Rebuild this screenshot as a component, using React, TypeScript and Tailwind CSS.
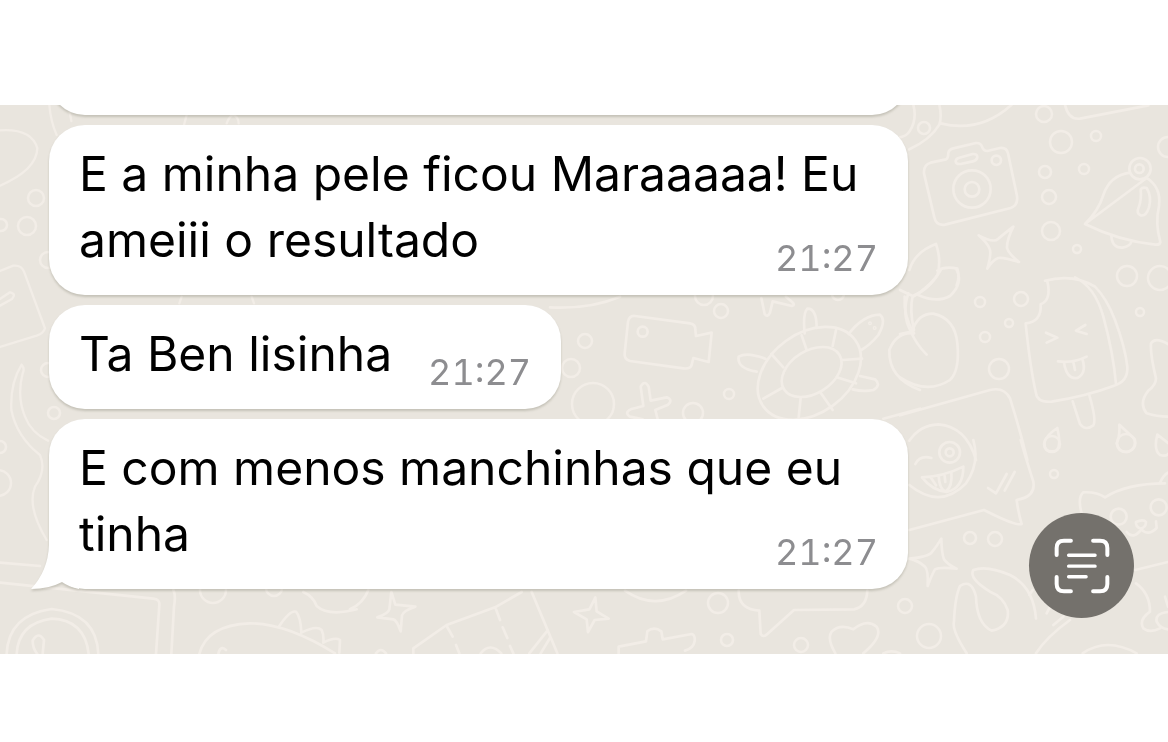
import React from "react";

type Message = { text: string; time: string; tail?: boolean };

const messages: Message[] = [
  { text: "E a minha pele ficou Maraaaaa! Eu ameiii o resultado", time: "21:27" },
  { text: "Ta Ben lisinha", time: "21:27" },
  { text: "E com menos manchinhas que eu tinha", time: "21:27", tail: true },
];

const dots: [number, number, number][] = [
  // right column
  [1044, 114, 8], [1061, 142, 11], [1096, 136, 5], [1045, 172, 6], [1084, 169, 5],
  [1049, 197, 7], [1051, 231, 9], [1077, 249, 4], [1127, 276, 10], [1160, 278, 12],
  [1168, 147, 10], [980, 302, 5], [1021, 299, 7], [1009, 323, 4], [985, 337, 5],
  [999, 369, 10], [1140, 312, 4], [1054, 474, 4], [1052, 444, 8], [1126, 443, 9],
  [970, 538, 6], [995, 539, 7], [924, 128, 6],
  // middle
  [585, 341, 7], [571, 368, 9], [593, 404, 21], [721, 311, 7], [729, 394, 5], [693, 413, 10],
  [704, 296, 9], [838, 294, 6],
  // bottom
  [718, 603, 10], [727, 640, 6], [801, 645, 7], [905, 606, 7], [929, 636, 12],
  [213, 590, 13], [274, 588, 8],
  // left
  [36, 198, 8], [27, 226, 9], [1, 225, 6], [48, 260, 8], [54, 413, 6], [48, 370, 7],
  [0, 447, 6], [-2, 483, 13],
];

function Wallpaper() {
  return (
    <svg
      aria-hidden="true"
      className="absolute inset-0 h-full w-full"
      viewBox="0 105 1168 549"
      preserveAspectRatio="xMidYMid slice"
      fill="none"
      stroke="#f2ede7"
      strokeLinecap="round"
      strokeLinejoin="round"
    >
      <g strokeWidth="2.5">
        {dots.map(([x, y, r]) => (
          <circle key={`${x}-${y}`} cx={x} cy={y} r={r} />
        ))}
      </g>

      {/* camera, bell, star */}
      <g transform="translate(900 100) scale(.33333)" strokeWidth="8">
        <path d="M40 14Q52 60 28 95Q20 108 0 112M118 14Q126 50 118 74Q90 120 28 148M122 70Q240 100 335 14" />
        <path d="M495 14Q505 60 540 56L745 16" />
        <path d="M92 188L138 178Q145 174 145 158Q147 148 160 145L228 129Q242 128 246 140Q250 153 262 153L300 144Q320 142 324 160L351 288Q355 316 332 324L135 374Q108 378 103 352L72 220Q70 194 92 188Z" />
        <path d="M178 173L218 162Q232 161 232 171Q231 181 218 184L182 192Q168 193 167 184Q167 176 178 173Z" />
        <circle cx="289" cy="181" r="14" />
        <circle cx="216" cy="267" r="56" />
        <circle cx="216" cy="268" r="22" />
        <path d="M236 406Q280 430 294 417Q308 405 340 380Q320 420 321 444Q325 460 357 486Q310 471 295 474Q278 480 262 506Q275 460 269 447Q263 430 236 406Z" />
        <path d="M555 372Q596 332 610 285Q630 226 690 218M740 234Q784 262 777 318Q765 370 781 426Q780 435 766 434Q655 422 555 372Z" />
        <circle cx="720" cy="206" r="32" />
        <circle cx="718" cy="206" r="13" />
        <path d="M722 268Q728 260 740 264Q756 290 747 322Q738 350 722 346Q708 340 716 322Q725 300 722 268ZM634 406Q636 445 668 443Q692 438 695 422" />
        <path d="M28 510Q45 455 108 432Q125 480 112 526Q80 566 40 590M112 512Q135 498 172 506Q180 530 170 556" />
      </g>

      {/* cherry, ice lolly, splash */}
      <g transform="translate(900 270) scale(.33333)" strokeWidth="8">
        <path d="M122 0Q90 58 38 78M170 0Q190 40 150 78Q110 100 55 75M25 70Q5 130 30 180Q50 225 80 254M0 60L38 78Q28 120 42 180M38 180Q55 130 100 131Q165 145 172 220Q180 300 150 330Q80 375 0 322M0 192L38 184" />
        <path d="M435 32Q520 10 585 50Q620 85 645 150Q675 230 682 290Q685 335 640 348Q560 378 455 395Q412 398 408 370Q390 290 377 160Q425 155 422 103Q455 90 442 34M525 22Q585 50 610 140Q640 250 648 342" />
        <path d="M438 188L472 203L440 218M556 165L528 182L560 192M474 274Q520 280 560 260M492 278Q500 328 532 324Q560 310 548 270M520 276L525 300M518 394L540 462Q556 484 580 466Q590 450 568 376" />
        <path d="M472 474Q485 530 468 542Q430 552 434 515Q440 495 472 474ZM658 464Q660 500 650 520Q655 550 685 545Q712 535 704 507ZM772 494Q760 540 780 555Q800 560 806 550M772 494L806 520" />
        <path d="M804 222Q765 200 753 220Q750 250 768 325Q768 345 745 362Q715 400 740 430Q770 440 804 440" />
        <path d="M0 436L270 360Q312 350 330 385Q360 480 382 570" />
        <path d="M28 512Q60 465 115 463Q200 470 228 570" />
      </g>

      {/* laughing sticker, cat, leaves */}
      <g transform="translate(900 440) scale(.33333)" strokeWidth="8">
        <path d="M220 0Q240 70 198 130Q120 210 28 135M362 0Q370 30 400 125Q408 170 350 180Q355 220 365 252Q350 260 252 210L28 270" />
        <circle cx="149" cy="37" r="31" />
        <circle cx="149" cy="37" r="12" />
        <path d="M46 72Q60 44 94 54M66 112Q130 110 190 80Q190 145 140 156Q95 150 66 112ZM92 112L108 136M116 106Q118 150 138 154Q158 140 154 96M134 108L136 126M264 144L288 160L320 102M344 96L314 152" />
        <path d="M28 356Q85 350 95 337Q110 320 124 296Q125 340 132 358Q145 375 170 386Q120 380 105 388Q95 405 83 438Q85 390 75 380Q55 362 28 356Z" />
        <path d="M200 640Q155 570 162 545Q165 470 180 438Q215 415 228 470Q230 550 275 572Q330 560 323 510Q310 470 270 455Q205 415 220 390Q260 375 330 405Q400 440 408 535M408 640Q440 590 510 540M440 520L450 500M460 555L490 530M388 465L398 450" />
        <path d="M548 230Q530 175 550 157Q590 155 615 172Q680 130 795 130M780 128Q790 105 804 98M706 390L804 366M708 430Q750 460 750 515Q715 540 730 565Q750 580 780 565M795 470L804 500M804 516Q765 520 770 545Q780 565 804 568M548 640Q620 590 710 640" />
        <circle cx="656" cy="230" r="24" />
        <circle cx="776" cy="202" r="24" />
        <path d="M708 246Q730 236 738 246Q738 262 722 266Q706 260 708 246ZM680 276Q700 300 724 268Q745 290 770 264L768 244" />
      </g>

      {/* video camera, turtle, plus */}
      <g transform="translate(550 290) scale(.33333)" strokeWidth="8">
        <path d="M0 52Q120 58 210 20" />
        <path d="M255 78L420 100Q438 103 436 120L438 138L485 128L476 216L430 204L425 225Q420 238 400 235L240 213Q222 208 224 190L234 95Q238 76 255 78Z" />
        <circle cx="278" cy="125" r="15" />
        <path d="M272 290Q284 268 296 290L302 332L350 322Q370 330 354 344L316 360L326 400M278 388L240 380Q222 368 242 358L280 348L272 290" />
        <path d="M634 24L644 72Q652 84 660 68L668 34L726 48Q738 44 724 34L708 20" />
        <ellipse cx="778" cy="250" rx="170" ry="120" transform="rotate(-36 778 250)" />
        <ellipse cx="785" cy="246" rx="98" ry="64" transform="rotate(-32 785 246)" />
        <path d="M755 136L770 180M858 120L848 168M936 206L878 210M918 280L860 262M848 360L812 308M746 382L752 324M640 326L696 294M664 192L700 232M764 130Q758 70 772 56Q800 55 800 114M646 206Q590 185 566 200Q560 235 620 245M896 132Q940 75 990 74Q1010 90 985 135Q960 165 934 180M930 258L975 268Q995 285 970 300Q940 306 908 298" />
        <path d="M1064 20Q1060 80 1092 130M1092 130Q1040 125 1018 180Q1015 265 1110 300M1000 386L1110 356" />
        <circle cx="960" cy="100" r="2" />
        <circle cx="974" cy="114" r="2" />
      </g>

      {/* left edge */}
      <g transform="translate(0 95) scale(.33333)" strokeWidth="7">
        <path d="M0 106Q95 100 112 160Q110 225 0 272M148 30Q152 80 170 120M205 30L214 78M560 60L552 90M680 85Q690 60 700 60Q715 65 716 85M0 528L40 512Q65 510 72 530L135 700Q130 715 110 722L0 756M0 612L30 592Q50 596 36 612L0 632M545 605L538 625M755 605L762 625" />
      </g>
      <g transform="translate(0 300) scale(.33333)" strokeWidth="7">
        <path d="M65 194Q30 250 34 330Q50 410 120 465Q140 510 105 560Q80 620 140 720M65 194Q75 205 68 220Q50 290 75 350Q95 400 144 422" />
      </g>

      {/* bottom strip */}
      <g transform="translate(0 570) scale(.33333)" strokeWidth="8">
        <path d="M0 -22L120 -12M0 38L460 86Q480 88 478 105L468 252M520 60Q528 75 522 110L514 252M20 252Q25 135 155 117Q290 130 295 252M50 252Q55 160 155 146Q255 150 266 252M128 252L132 210Q115 182 98 212Q98 235 112 252" />
        <path d="M598 252Q620 165 750 160Q860 160 1005 250M838 168Q870 120 888 125Q902 140 904 188Q950 165 965 180Q972 195 970 218Q1005 200 1020 210L1018 248M655 252Q660 225 678 240M910 66Q940 80 950 108Q985 140 1070 118M1050 118Q1090 100 1105 60" />
      </g>
      <g transform="translate(350 570) scale(.33333)" strokeWidth="8">
        <path d="M124 66L136 104L196 110Q160 122 156 136L152 184Q140 150 130 148L82 142Q115 130 118 118ZM736 82L740 124L776 146L734 150L714 186L710 148L672 126L718 118Z" />
        <path d="M190 250V235L290 165L435 112L515 66M545 66L622 250M290 168L308 200M318 225L328 250M438 118L450 150M458 172L472 204M480 228L490 250M590 185L538 250M600 204L572 250M78 250Q92 230 108 250M392 250Q420 215 454 250M825 62Q915 125 1008 62M806 250V230L888 214L892 184Q912 168 934 184L938 208L1025 192Q1036 195 1034 214Q1030 236 1005 242" />
      </g>
      <g transform="translate(650 570) scale(.33333)" strokeWidth="8">
        <path d="M266 62Q265 118 328 122L332 192Q340 204 352 192L432 120L612 118Q650 110 652 62M556 250Q530 205 545 185Q570 160 610 178Q650 145 680 170Q700 200 640 250M700 250Q725 238 750 250" />
      </g>
    </svg>
  );
}

function Tail() {
  return (
    <svg
      aria-hidden="true"
      className="absolute bottom-0 -left-[18px] h-14 w-12"
      viewBox="0 0 48 56"
      fill="#fff"
    >
      <path d="M18 0V12Q17 38 0 56Q18 56 31 49Q38 54 48 56V0Z" />
    </svg>
  );
}

function Bubble({ text, time, tail }: Message) {
  return (
    <article className="relative max-w-[859px] rounded-[36px] bg-white px-[30px] pt-4 pb-[22px] drop-shadow-[0_2px_1px_rgba(90,90,70,0.25)]">
      {tail && <Tail />}
      <p className="relative text-[48px] leading-[66px] text-black">
        {text}
        <time className="float-right mt-9 ml-9 text-[36px] leading-[30px] text-[#8d8d90] tabular-nums">{time}</time>
      </p>
    </article>
  );
}

function ScanButton() {
  return (
    <button
      type="button"
      aria-label="Scan text"
      className="absolute right-[34px] bottom-9 flex size-[105px] items-center justify-center rounded-full bg-[#74716c]"
    >
      <svg
        className="size-14"
        viewBox="460 295 169 169"
        fill="none"
        stroke="#fff"
        strokeLinecap="round"
        strokeLinejoin="round"
      >
        <path
          strokeWidth="12"
          d="M468 346V325Q468 303 490 303H511M578 303H599Q621 303 621 325V346M621 413V434Q621 456 599 456H578M511 456H490Q468 456 468 434V413"
        />
        <path strokeWidth="10" d="M504 347H584M504 380H584M504 412H557" />
      </svg>
    </button>
  );
}

export default function App() {
  return (
    <div className="min-h-screen bg-white pt-[105px] font-['Inter','Liberation_Sans',sans-serif]">
      <main className="relative flex h-[549px] flex-col justify-end overflow-hidden bg-[#e9e5de] pb-[65px]">
        <Wallpaper />
        <section className="relative flex flex-col items-start gap-[10px] pr-5 pl-[49px]">
          <div className="h-24 w-full max-w-[859px] rounded-[36px] bg-white drop-shadow-[0_2px_1px_rgba(90,90,70,0.25)]" />
          {messages.map((message) => (
            <Bubble key={message.text} {...message} />
          ))}
        </section>
        <ScanButton />
      </main>
    </div>
  );
}
